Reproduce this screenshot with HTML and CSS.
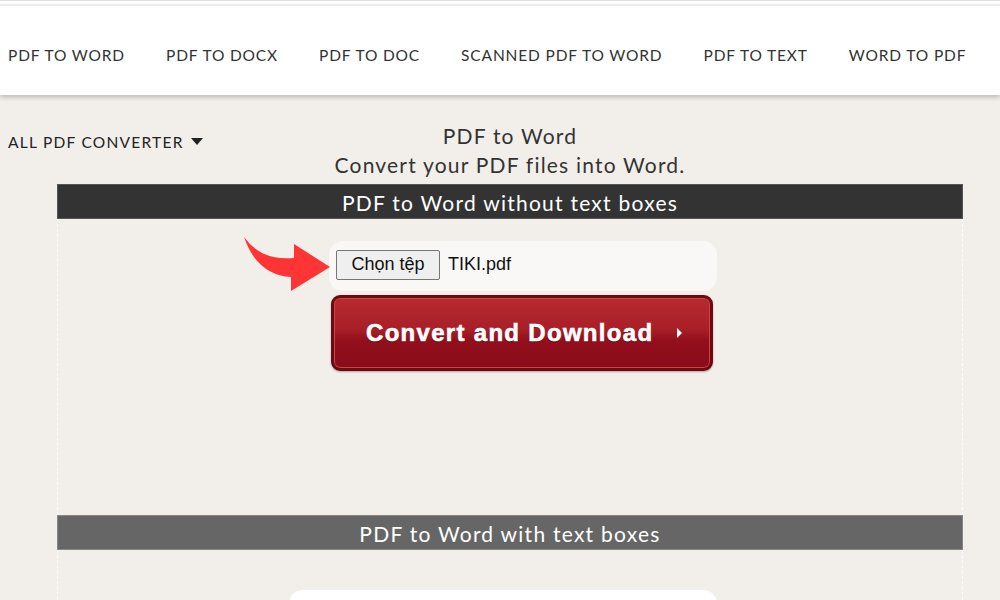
FILE: index.html
```html
<!DOCTYPE html>
<html lang="vi">
<head>
  <meta charset="UTF-8">
  <title>PDF to Word</title>
  <link rel="stylesheet" href="styles.css">
</head>
<body>
  <div class="topstrip"></div>
  <!-- thanh menu -->
  <nav class="menu">
    <a href="#">PDF TO WORD</a>
    <a href="#">PDF TO DOCX</a>
    <a href="#">PDF TO DOC</a>
    <a href="#">SCANNED PDF TO WORD</a>
    <a href="#">PDF TO TEXT</a>
    <a href="#">WORD TO PDF</a>
  </nav>

  <div class="main">
    <div class="allconv">ALL PDF CONVERTER <span class="caret"></span></div>

    <div class="heading">
      <div class="title">PDF to Word</div>
      <div class="sub">Convert your PDF files into Word.</div>
    </div>

    <div class="box">
      <div class="bar">PDF to Word without text boxes</div>
      <div class="content">
        <div class="filerow">
          <svg class="arrow" width="92" height="60" viewBox="0 0 92 60">
            <path d="M3 4 Q20 28 53 25 L53 11 L89 34 L50 58 L50 44 Q16 42 3 4 Z" fill="#ff3535"/>
          </svg>
          <div class="filebox">
            <button class="choose">Chọn tệp</button>
            <span class="fname">TIKI.pdf</span>
          </div>
        </div>
        <button class="convert">Convert and Download <span class="tri"></span></button>
      </div>
    </div>

    <div class="box">
      <div class="bar bar2">PDF to Word with text boxes</div>
      <div class="content content2">
        <div class="whitebox"></div>
      </div>
    </div>
  </div>
</body>
</html>
```

FILE: styles.css
```css
* {
  box-sizing: border-box;
}

body {
  margin: 0;
  background-color: #f2efea;
  font-family: "Lato", "Open Sans", sans-serif;
  color: #333;
  overflow: hidden;
}

.topstrip {
  height: 4px;
  background-color: #e0e0e0;
  border-bottom: 3px solid #fff;
}

/* menu */
.menu {
  display: flex;
  align-items: center;
  gap: 41px;
  height: 91px;
  padding-left: 8px;
  padding-top: 8px;
  background-color: #fff;
  border-top: 2px solid #ececec;
  box-shadow: 0 3px 4px rgba(0, 0, 0, 0.18);
}

.menu a {
  color: #333;
  text-decoration: none;
  font-size: 15.5px;
  letter-spacing: 0.85px;
  white-space: nowrap;
}

.main {
  position: relative;
  padding-top: 26px;
}

.allconv {
  position: absolute;
  left: 8px;
  top: 38px;
  font-size: 15.5px;
  letter-spacing: 1.25px;
  color: #222;
}

.caret {
  display: inline-block;
  margin-left: 2px;
  vertical-align: 3px;
  border-left: 6px solid transparent;
  border-right: 6px solid transparent;
  border-top: 7px solid #222;
}

.heading {
  width: 906px;
  margin-left: 57px;
  margin-bottom: 5px;
  text-align: center;
  font-size: 21px;
  line-height: 29px;
  letter-spacing: 1.2px;
  color: #333;
}

.box {
  width: 906px;
  margin-left: 57px;
}

.bar {
  height: 35px;
  line-height: 35px;
  background-color: #333;
  border: 1px solid #555;
  color: #fff;
  text-align: center;
  font-size: 21px;
  letter-spacing: 1.25px;
}

.bar2 {
  background-color: #666;
  border-color: #888;
}

.content {
  height: 296px;
  padding-top: 22px;
  padding-left: 271px;
  border-left: 1px dashed #fbfaf8;
  border-right: 1px dashed #fbfaf8;
}

.content2 {
  height: 60px;
  padding-top: 40px;
  padding-left: 231px;
}

.filerow {
  position: relative;
  width: 388px;
}

.arrow {
  position: absolute;
  left: -88px;
  top: -8px;
}

.filebox {
  display: flex;
  align-items: center;
  height: 50px;
  padding-left: 7px;
  padding-bottom: 3px;
  background-color: #f9f8f6;
  border-radius: 14px;
}

.choose {
  width: 104px;
  height: 30px;
  padding: 0;
  background-color: #efefef;
  border: 1px solid #767676;
  border-radius: 2px;
  font-family: "Liberation Sans", Arial, sans-serif;
  font-size: 18px;
  color: #111;
}

.fname {
  margin-left: 8px;
  font-family: "Liberation Sans", Arial, sans-serif;
  font-size: 18px;
  color: #111;
}

.convert {
  display: flex;
  align-items: center;
  width: 382px;
  height: 76px;
  margin-top: 4px;
  margin-left: 2px;
  padding: 0 0 0 32px;
  border: 3px solid #6e0910;
  border-radius: 9px;
  background: linear-gradient(#b82a2f, #a91f27 45%, #930f1d 60%, #8a0c1a);
  box-shadow: inset 0 0 0 1px #c94548, 0 1px 2px rgba(0, 0, 0, 0.3);
  color: #fff;
  font-family: "Liberation Sans", Arial, sans-serif;
  font-weight: bold;
  font-size: 24px;
  letter-spacing: 1.3px;
  -webkit-text-stroke: 0.6px #fff;
  text-shadow: 0 1px 1px rgba(0, 0, 0, 0.4);
}

.tri {
  display: inline-block;
  margin-left: 24px;
  border-top: 5px solid transparent;
  border-bottom: 5px solid transparent;
  border-left: 5px solid #fff;
}

.whitebox {
  width: 428px;
  height: 40px;
  background-color: #fff;
  border-radius: 14px;
}
```
